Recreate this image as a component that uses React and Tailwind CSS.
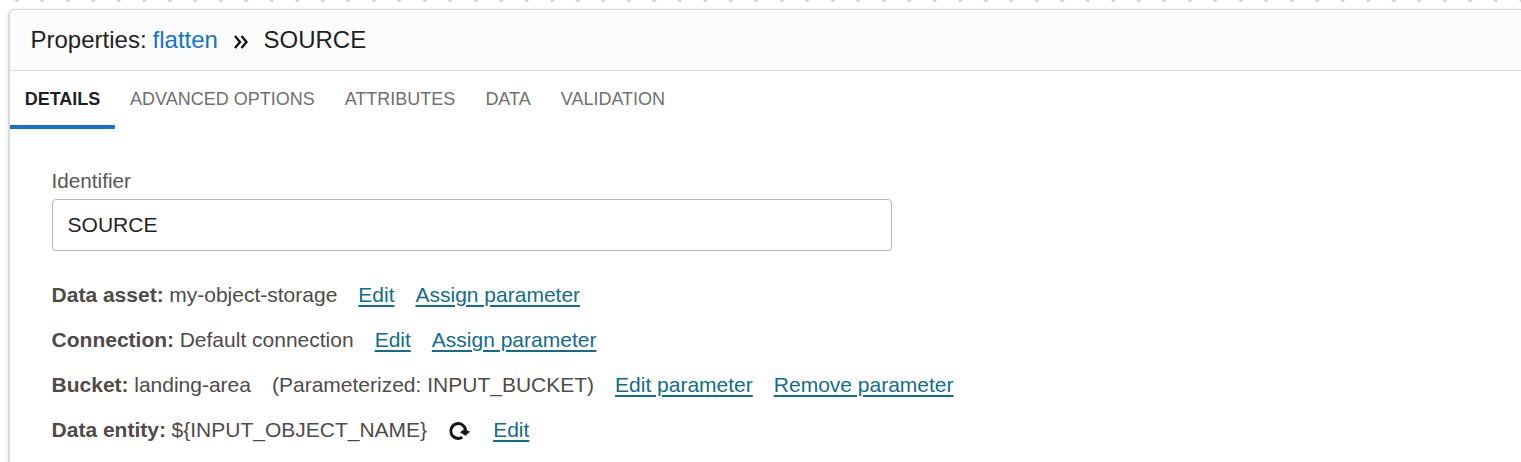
const Row = ({ label, value, children }) => (
  <div className="flex h-[45px] items-center whitespace-nowrap text-[21px] text-[#4f4b48]">
    <b className="mr-[5.6px] font-bold">{label}</b>
    <span>{value}</span>
    {children}
  </div>
);
const Link = ({ children }) => (
  <a className="ml-[21px] text-[#116d8e] underline decoration-2 underline-offset-[2.5px]">{children}</a>
);
const tabs = ["ADVANCED OPTIONS", "ATTRIBUTES", "DATA", "VALIDATION"];

export default function App() {
  return (
    <div className="h-[462px] overflow-hidden bg-white pl-[8px] font-['Liberation_Sans',Arial,sans-serif]">
      <div className="h-[9px] bg-[radial-gradient(circle,#cfcfcf_1.3px,transparent_2px)] bg-[length:25.51px_21px] bg-[position:-4px_-10px]" />
      <main className="h-[480px] rounded-tl-[7px] border-t border-l-2 border-t-[#d6d6d6] border-l-[#dadada] bg-white shadow-[-1px_0_3px_rgba(0,0,0,0.07)]">
        <header className="flex h-[61px] items-center rounded-tl-[5px] border-b border-[#e0e0e0] bg-[#fcfcfc] pl-[20.5px] text-[24px] text-[#1f1f1f]">
          <span>Properties:</span>
          <a className="ml-[6px] text-[#1272ce]">flatten</a>
          <svg className="mr-[14px] ml-[15.5px] mt-1" width="16" height="16" viewBox="0 0 16 16" fill="none" stroke="#111" strokeWidth="2.3">
            <path d="M2 2l5 6-5 6M8.5 2l5 6-5 6" />
          </svg>
          <span>SOURCE</span>
        </header>
        <nav className="flex h-[58px] items-stretch text-[18px] text-[#6f6f6f]">
          <div className="flex w-[105px] items-center justify-center border-b-4 border-[#1572c8] pt-0.5 font-bold text-[#1f1f1f]">DETAILS</div>
          {tabs.map((t) => (
            <div key={t} className="flex items-center px-[15px] pb-0.5">{t}</div>
          ))}
        </nav>
        <section className="pl-[41.6px] pt-[40px]">
          <label className="block h-[30px] text-[20.7px] leading-[24px] text-[#5a5653]">Identifier</label>
          <div className="mb-[21px] flex h-[52px] w-[840px] items-center rounded-[4px] border border-[#b8b8b8] pl-[15px] text-[21px] text-[#1f1f1f]">SOURCE</div>
          <Row label="Data asset:" value="my-object-storage"><Link>Edit</Link><Link>Assign parameter</Link></Row>
          <Row label="Connection:" value="Default connection"><Link>Edit</Link><Link>Assign parameter</Link></Row>
          <Row label="Bucket:" value="landing-area">
            <span className="ml-[21px]">(Parameterized: INPUT_BUCKET)</span>
            <Link>Edit parameter</Link><Link>Remove parameter</Link>
          </Row>
          <Row label="Data entity:" value="${INPUT_OBJECT_NAME}">
            <svg className="mt-0.5 ml-[21px] mr-[2px]" width="22" height="22" viewBox="0 0 22 22" fill="none">
              <path d="M14.2 17.2A7.4 7.4 0 1 1 17.6 11" stroke="#161616" strokeWidth="3" />
              <path d="M12.4 12.2L16 9.6L21.6 11.8L17.6 15.4z" fill="#161616" stroke="#161616" strokeWidth="0.6" />
            </svg>
            <Link>Edit</Link>
          </Row>
        </section>
      </main>
    </div>
  );
}
